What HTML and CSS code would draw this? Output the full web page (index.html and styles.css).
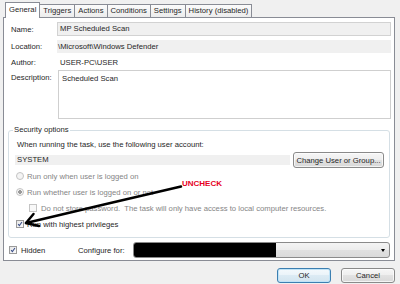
FILE: index.html
```html
<!DOCTYPE html>
<html lang="en">

<head>
    <meta charset="UTF-8">
    <meta name="viewport" content="width=device-width, initial-scale=1.0">
    <title>MP Scheduled Scan Properties</title>
    <link rel="stylesheet" href="styles.css">
</head>

<body>
    <div class="dialog">
        <div class="tabs">
            <div class="tab active">General</div>
            <div class="tab">Triggers</div>
            <div class="tab">Actions</div>
            <div class="tab">Conditions</div>
            <div class="tab">Settings</div>
            <div class="tab">History (disabled)</div>
        </div>
        <div class="page">
            <div class="row name-row">
                <span class="label">Name:</span>
                <div class="field boxed">MP Scheduled Scan</div>
            </div>
            <div class="row location-row">
                <span class="label">Location:</span>
                <div class="field flat">\Microsoft\Windows Defender</div>
            </div>
            <div class="row author-row">
                <span class="label">Author:</span>
                <div class="field plain">USER-PC\USER</div>
            </div>
            <div class="row desc-row">
                <span class="label">Description:</span>
                <div class="field memo">Scheduled Scan</div>
            </div>

            <fieldset class="security">
                <legend>Security options</legend>
                <p class="account-text">When running the task, use the following user account:</p>
                <div class="account">
                    <div class="field flat account-name">SYSTEM</div>
                    <button class="btn change-btn">Change User or Group...</button>
                </div>
                <div class="option disabled"><span class="radio"></span>Run only when user is logged on</div>
                <div class="option disabled"><span class="radio checked"></span>Run whether user is logged on or not</div>
                <div class="option disabled indent"><span class="check"></span>Do not store password.&nbsp; The task will only have access to local computer resources.</div>
                <div class="option"><span class="check checked"><svg viewBox="0 0 8 8"><polyline points="1.5,4.2 3.2,6.2 6.6,1.4" /></svg></span>Run with highest privileges</div>
            </fieldset>

            <div class="bottom-row">
                <div class="option hidden-opt"><span class="check checked"><svg viewBox="0 0 8 8"><polyline points="1.5,4.2 3.2,6.2 6.6,1.4" /></svg></span>Hidden</div>
                <span class="configure-label">Configure for:</span>
                <div class="combo">
                    <span class="redacted"></span>
                    <span class="drop"></span>
                </div>
            </div>
        </div>
        <div class="buttons">
            <button class="btn default">OK</button>
            <button class="btn">Cancel</button>
        </div>

        <!-- annotation drawn over the screenshot -->
        <div class="note">UNCHECK</div>
        <svg class="arrow" viewBox="0 0 400 284">
            <path d="M181 186.5 L104 204.5 L26 223" />
            <path d="M33.5 214 L26 223 L39 226" />
        </svg>
    </div>
</body>

</html>
```

FILE: styles.css
```css
body {
    margin: 0;
    background-color: #f0f0f0;
    font-family: "Liberation Sans", Arial, sans-serif;
    font-size: 7.7px;
    color: #262626;
}

.dialog {
    position: relative;
    width: 400px;
    height: 284px;
    padding-top: 2px;
    box-sizing: border-box;
}

/* tabs */
.tabs {
    display: flex;
    align-items: flex-end;
    height: 15px;
    margin-left: 5px;
}

.tab {
    height: 13px;
    line-height: 12px;
    padding: 0 3px;
    border: 1px solid #898c95;
    border-bottom: none;
    background: linear-gradient(#fbfbfb, #ececec);
    box-sizing: border-box;
    margin-left: -1px;
    white-space: nowrap;
}

.tab:first-child {
    margin-left: 0;
}

.tab.active {
    position: relative;
    z-index: 1;
    height: 16px;
    line-height: 14px;
    margin-bottom: -1px;
    background: #fff;
}

/* tab page */
.page {
    margin-left: 3px;
    width: 392px;
    box-sizing: border-box;
    border: 1px solid #898c95;
    background-color: #fff;
    padding: 4px 3px 2px 7px;
}

.row {
    display: flex;
    align-items: center;
}

.label {
    width: 46px;
    flex-shrink: 0;
}

.field {
    flex: 1;
    box-sizing: border-box;
    white-space: nowrap;
}

.name-row .field {
    height: 14px;
    line-height: 12px;
    padding-left: 2px;
    border: 1px solid #d2d2d2;
    background-color: #f0f0f0;
}

.flat {
    background-color: #f0f0f0;
}

.location-row {
    margin-top: 4px;
}

.location-row .field {
    height: 13px;
    line-height: 13px;
    padding-left: 1px;
}

.author-row {
    margin-top: 4px;
    height: 10px;
}

.author-row .field {
    padding-left: 3px;
}

.desc-row {
    margin-top: 3px;
    align-items: flex-start;
}

.desc-row .label {
    line-height: 15px;
}

.memo {
    margin-left: 1px;
    height: 49px;
    border: 1px solid #cfcfcf;
    padding: 3px 3px;
    line-height: 9px;
}

/* security group */
.security {
    margin: 6px 1px 0 -3px;
    padding: 0 5px 5px 7px;
    border: 1px solid #d5dfe5;
    border-radius: 3px;
}

.security legend {
    margin-left: -3px;
    padding: 0 1px;
    line-height: 10px;
}

.account-text {
    margin: 5px 0 0 1px;
    line-height: 10px;
}

.account {
    display: flex;
    align-items: center;
    gap: 3px;
    margin-top: 2px;
    margin-left: -1px;
}

.account-name {
    height: 10px;
    line-height: 10px;
    padding-left: 2px;
}

.btn {
    font-family: "Liberation Sans", Arial, sans-serif;
    font-size: 7.7px;
    color: #262626;
    padding: 0;
    border: 1px solid #8a8a8a;
    border-radius: 3px;
    background: linear-gradient(#f6f6f6 0%, #eeeeee 50%, #e2e2e2 50%, #d8d8d8 100%);
    box-shadow: inset 0 0 0 1px rgba(255, 255, 255, 0.7);
}

.change-btn {
    width: 91px;
    height: 16px;
}

.option {
    display: flex;
    align-items: center;
    height: 16px;
    white-space: nowrap;
}

.option.disabled {
    color: #858585;
}

.option.indent {
    margin-left: 13px;
}

.radio,
.check {
    width: 8px;
    height: 8px;
    box-sizing: border-box;
    margin-right: 3px;
    flex-shrink: 0;
    border: 1px solid #9a9a9a;
    background: linear-gradient(135deg, #e6e6e6, #fbfbfb);
}

.radio {
    border-radius: 50%;
    border-color: #c4c4c4;
    background: #f4f4f4;
}

.radio.checked {
    background: radial-gradient(circle, #9a9a9a 0 1.6px, #f4f4f4 2px);
}

.option.disabled .check {
    border-color: #c4c4c4;
    background: #f8f8f8;
    margin-right: 4px;
}

.check svg {
    display: block;
    width: 6px;
    height: 6px;
}

.check polyline {
    fill: none;
    stroke: #3b4f8a;
    stroke-width: 1.4;
}

/* hidden + configure for */
.bottom-row {
    display: flex;
    align-items: center;
    margin-top: 4px;
    height: 16px;
}

.hidden-opt {
    width: 69px;
    margin-left: -2px;
}

.hidden-opt .check {
    margin-right: 4px;
}

.configure-label {
    width: 55px;
    flex-shrink: 0;
}

.combo {
    flex: 1;
    display: flex;
    align-items: center;
    justify-content: space-between;
    height: 16px;
    margin-right: 1px;
    box-sizing: border-box;
    border: 1px solid #8a8a8a;
    border-radius: 3px;
    background: linear-gradient(#f4f4f4 0%, #ececec 50%, #e0e0e0 50%, #dadada 100%);
    overflow: hidden;
}

.redacted {
    width: 142px;
    height: 16px;
    background-color: #000;
}

.drop {
    width: 0;
    height: 0;
    margin-right: 4px;
    border-left: 2px solid transparent;
    border-right: 2px solid transparent;
    border-top: 3px solid #000;
}

/* dialog buttons */
.buttons {
    display: flex;
    justify-content: flex-end;
    gap: 10px;
    margin-top: 7px;
    padding-right: 5px;
}

.buttons .btn {
    width: 54px;
    height: 15px;
}

.buttons .btn.default {
    border-color: #3c7fb1;
    box-shadow: inset 0 0 0 1px #bfe3f7;
    background: linear-gradient(#f4f9fc 0%, #eaf3f9 50%, #dcebf4 50%, #d2e4ef 100%);
}

/* annotation */
.note {
    position: absolute;
    left: 182px;
    top: 180px;
    font-size: 8px;
    font-weight: bold;
    line-height: 8px;
    color: #e6001e;
}

.arrow {
    position: absolute;
    left: 0;
    top: 0;
    width: 400px;
    height: 284px;
    pointer-events: none;
}

.arrow path {
    fill: none;
    stroke: #000;
    stroke-width: 2.5;
    stroke-linecap: round;
    stroke-linejoin: round;
}
```
